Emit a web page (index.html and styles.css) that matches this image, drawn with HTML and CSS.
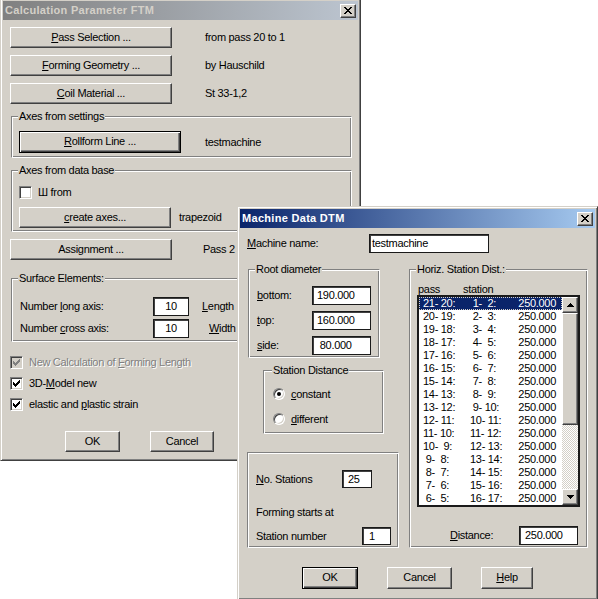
FILE: index.html
```html
<!DOCTYPE html>
<html>
<head>
<meta charset="utf-8">
<link rel="stylesheet" href="styles.css">
</head>
<body>
<div class="win win-main">
  <div class="title title-inactive">
    <span class="title-text">Calculation Parameter FTM</span>
    <span class="close raised"><svg width="8" height="7" viewBox="0 0 8 7" shape-rendering="crispEdges"><path d="M0 0h2v1h-2zM6 0h2v1h-2zM1 1h2v1h-2zM5 1h2v1h-2zM2 2h4v1h-4zM3 3h2v1h-2zM2 4h4v1h-4zM1 5h2v1h-2zM5 5h2v1h-2zM0 6h2v1h-2zM6 6h2v1h-2z"/></svg></span>
  </div>
  <div class="m-body">
    <div class="row m-btnrow"><div class="btn raised w162 h21"><span><u>P</u>ass Selection ...</span></div><span class="m-val">from pass 20 to 1</span></div>
    <div class="row m-btnrow"><div class="btn raised w162 h21"><span><u>F</u>orming Geometry ...</span></div><span class="m-val">by Hauschild</span></div>
    <div class="row m-btnrow"><div class="btn raised w162 h21"><span><u>C</u>oil Material ...</span></div><span class="m-val">St 33-1,2</span></div>

    <div class="grp m-g1">
      <span class="glabel">Axes from settings</span>
      <div class="row g1-row"><div class="btn default w162 h22"><span><u>R</u>ollform Line ...</span></div><span class="g1-val">testmachine</span></div>
    </div>

    <div class="grp m-g2">
      <span class="glabel">Axes from data base</span>
      <div class="row g2-cb"><span class="cb"></span><span class="cb-text">Ш from</span></div>
      <div class="row g2-btn"><div class="btn raised w152 h21"><span><u>c</u>reate axes...</span></div><span class="g2-val">trapezoid</span></div>
    </div>

    <div class="row m-assign"><div class="btn raised w162 h21"><span>Assignment ...</span></div><span class="assign-val">Pass 2</span></div>

    <div class="grp m-g3">
      <span class="glabel">Surface Elements:</span>
      <div class="row g3-row1"><span class="g3-lbl">Number <u>l</u>ong axis:</span><div class="edit center w36 h19">10</div><span class="g3-len"><u>L</u>ength</span></div>
      <div class="row g3-row2"><span class="g3-lbl">Number <u>c</u>ross axis:</span><div class="edit center w36 h19">10</div><span class="g3-wid"><u>W</u>idth</span></div>
    </div>

    <div class="row m-cb first"><span class="cb disabled"><svg width="7" height="7" viewBox="0 0 7 7" shape-rendering="crispEdges"><path d="M6 0h1v1h-1zM5 1h2v1h-2zM0 2h1v1h-1zM4 2h3v1h-3zM0 3h2v1h-2zM3 3h3v1h-3zM0 4h5v1h-5zM1 5h3v1h-3zM2 6h1v1h-1z"/></svg></span><span class="cb-text dis">New Calculation of <u>F</u>orming Length</span></div>
    <div class="row m-cb"><span class="cb"><svg width="7" height="7" viewBox="0 0 7 7" shape-rendering="crispEdges"><path d="M6 0h1v1h-1zM5 1h2v1h-2zM0 2h1v1h-1zM4 2h3v1h-3zM0 3h2v1h-2zM3 3h3v1h-3zM0 4h5v1h-5zM1 5h3v1h-3zM2 6h1v1h-1z"/></svg></span><span class="cb-text">3D-<u>M</u>odel new</span></div>
    <div class="row m-cb"><span class="cb"><svg width="7" height="7" viewBox="0 0 7 7" shape-rendering="crispEdges"><path d="M6 0h1v1h-1zM5 1h2v1h-2zM0 2h1v1h-1zM4 2h3v1h-3zM0 3h2v1h-2zM3 3h3v1h-3zM0 4h5v1h-5zM1 5h3v1h-3zM2 6h1v1h-1z"/></svg></span><span class="cb-text">elastic and <u>p</u>lastic strain</span></div>

    <div class="row m-okrow"><div class="btn raised w55 h21"><span>OK</span></div><div class="btn raised w64 h21 m-cancel"><span>Cancel</span></div></div>
  </div>
</div>

<div class="win win-dtm">
  <div class="title title-active">
    <span class="title-text">Machine Data DTM</span>
    <span class="close raised"><svg width="8" height="7" viewBox="0 0 8 7" shape-rendering="crispEdges"><path d="M0 0h2v1h-2zM6 0h2v1h-2zM1 1h2v1h-2zM5 1h2v1h-2zM2 2h4v1h-4zM3 3h2v1h-2zM2 4h4v1h-4zM1 5h2v1h-2zM5 5h2v1h-2zM0 6h2v1h-2zM6 6h2v1h-2z"/></svg></span>
  </div>
  <div class="d-body">
    <div class="row d-name"><span class="d-name-lbl"><u>M</u>achine name:</span><div class="edit w120 h19">testmachine</div></div>

    <div class="d-cols">
      <div class="d-left">
        <div class="grp g-root">
          <span class="glabel">Root diameter</span>
          <div class="row root-row first"><span class="root-lbl"><u>b</u>ottom:</span><div class="edit pad4 w59 h19">190.000</div></div>
          <div class="row root-row"><span class="root-lbl"><u>t</u>op:</span><div class="edit pad4 w59 h19">160.000</div></div>
          <div class="row root-row"><span class="root-lbl"><u>s</u>ide:</span><div class="edit pad4 w59 h19"> 80.000</div></div>
        </div>
        <div class="grp g-sta">
          <span class="glabel">Station Distance</span>
          <div class="row rad-row first"><span class="radio"><span class="dot"></span></span><span class="rad-text"><u>c</u>onstant</span></div>
          <div class="row rad-row"><span class="radio"></span><span class="rad-text"><u>d</u>ifferent</span></div>
        </div>
        <div class="grp g-low">
          <div class="row low-row1"><span class="low-lbl1"><u>N</u>o. Stations</span><div class="edit pad5 w30 h18">25</div></div>
          <div class="low-line">Forming starts at</div>
          <div class="row low-row2"><span class="low-lbl2">Station number</span><div class="edit pad6 w29 h18">1</div></div>
        </div>
      </div>

      <div class="grp g-horiz">
        <span class="glabel">Horiz. Station Dist.:</span>
        <div class="hdr"><span class="hdr-pass">pass</span><span>station</span></div>
        <div class="listbox">
          <div class="rows">
            <div class="lrow sel"><span class="c1">21- 20:</span><span class="c2"> 1-  2:</span><span class="c3">250.000</span></div>
            <div class="lrow"><span class="c1">20- 19:</span><span class="c2"> 2-  3:</span><span class="c3">250.000</span></div>
            <div class="lrow"><span class="c1">19- 18:</span><span class="c2"> 3-  4:</span><span class="c3">250.000</span></div>
            <div class="lrow"><span class="c1">18- 17:</span><span class="c2"> 4-  5:</span><span class="c3">250.000</span></div>
            <div class="lrow"><span class="c1">17- 16:</span><span class="c2"> 5-  6:</span><span class="c3">250.000</span></div>
            <div class="lrow"><span class="c1">16- 15:</span><span class="c2"> 6-  7:</span><span class="c3">250.000</span></div>
            <div class="lrow"><span class="c1">15- 14:</span><span class="c2"> 7-  8:</span><span class="c3">250.000</span></div>
            <div class="lrow"><span class="c1">14- 13:</span><span class="c2"> 8-  9:</span><span class="c3">250.000</span></div>
            <div class="lrow"><span class="c1">13- 12:</span><span class="c2"> 9- 10:</span><span class="c3">250.000</span></div>
            <div class="lrow"><span class="c1">12- 11:</span><span class="c2">10- 11:</span><span class="c3">250.000</span></div>
            <div class="lrow"><span class="c1">11- 10:</span><span class="c2">11- 12:</span><span class="c3">250.000</span></div>
            <div class="lrow"><span class="c1">10-  9:</span><span class="c2">12- 13:</span><span class="c3">250.000</span></div>
            <div class="lrow"><span class="c1"> 9-  8:</span><span class="c2">13- 14:</span><span class="c3">250.000</span></div>
            <div class="lrow"><span class="c1"> 8-  7:</span><span class="c2">14- 15:</span><span class="c3">250.000</span></div>
            <div class="lrow"><span class="c1"> 7-  6:</span><span class="c2">15- 16:</span><span class="c3">250.000</span></div>
            <div class="lrow"><span class="c1"> 6-  5:</span><span class="c2">16- 17:</span><span class="c3">250.000</span></div>
          </div>
          <div class="sb">
            <div class="sb-btn raised"><svg width="7" height="4" viewBox="0 0 7 4" shape-rendering="crispEdges"><path d="M3 0h1v1h-1zM2 1h3v1h-3zM1 2h5v1h-5zM0 3h7v1h-7z"/></svg></div>
            <div class="sb-thumb raised"></div>
            <div class="sb-track"></div>
            <div class="sb-btn raised"><svg width="7" height="4" viewBox="0 0 7 4" shape-rendering="crispEdges"><path d="M0 0h7v1h-7zM1 1h5v1h-5zM2 2h3v1h-3zM3 3h1v1h-1z"/></svg></div>
          </div>
        </div>
        <div class="row dist-row"><span class="dist-lbl"><u>D</u>istance:</span><div class="edit pad5 w59 h19">250.000</div></div>
      </div>
    </div>

    <div class="row d-btns"><div class="btn default w56 h22"><span>OK</span></div><div class="btn raised w65 h22 d-cancel"><span>Cancel</span></div><div class="btn raised w52 h22 d-help"><span><u>H</u>elp</span></div></div>
  </div>
</div>
</body>
</html>
```

FILE: styles.css
```css
* { box-sizing: border-box; }
html, body { margin: 0; padding: 0; }
body {
  width: 598px; height: 599px; overflow: hidden; position: relative;
  background: #fff; color: #000;
  font-family: "Liberation Sans", Arial, sans-serif;
  font-size: 11px; line-height: 13px; letter-spacing: -0.3px;
}
u { text-decoration: underline; text-underline-offset: 1px; }
svg { display: block; fill: #000; }

/* windows */
.win {
  position: absolute; background: #d4d0c8;
  border: 1px solid; border-color: #d4d0c8 #404040 #404040 #d4d0c8;
  box-shadow: inset 1px 1px 0 #fff, inset -1px -1px 0 #808080;
  padding: 2px;
}
.win-main { left: 0; top: -2px; width: 361px; height: 463px; }
.win-dtm { left: 237px; top: 206px; width: 361px; height: 394px; }

.title {
  height: 19px; display: flex; align-items: center; justify-content: space-between;
  padding-left: 2px; font-weight: bold; letter-spacing: 0.3px;
}
.title-inactive { background: linear-gradient(to right, #808080, #bcc5d0); color: #d4d0c8; }
.title-active { background: linear-gradient(to right, #0a246a, #a6caf0); color: #fff; }
.close { width: 16px; height: 14px; margin-right: 2px; display: flex; align-items: center; justify-content: center; }

/* 3d styles */
.raised {
  background: #d4d0c8;
  border: 1px solid; border-color: #fff #404040 #404040 #fff;
  box-shadow: inset -1px -1px 0 #808080;
}
.btn { display: flex; align-items: center; justify-content: center; padding-bottom: 1px; flex: none; }
.default {
  background: #d4d0c8; border: 1px solid #000;
  box-shadow: inset 1px 1px 0 #fff, inset -1px -1px 0 #404040, inset -2px -2px 0 #808080;
}
.edit {
  background: #fff; border: 1px solid #1a1a1a;
  box-shadow: inset 1px 1px 0 #404040;
  padding-left: 2px; display: flex; align-items: center; white-space: pre; flex: none;
}
.edit.center { justify-content: center; padding-left: 0; }
.pad4 { padding-left: 4px; }
.pad5 { padding-left: 5px; }
.pad6 { padding-left: 6px; }

.w29 { width: 29px; } .w30 { width: 30px; } .w36 { width: 36px; }
.w52 { width: 52px; } .w55 { width: 55px; } .w56 { width: 56px; }
.w59 { width: 59px; } .w64 { width: 64px; } .w65 { width: 65px; }
.w120 { width: 120px; } .w152 { width: 152px; } .w162 { width: 162px; }
.h18 { height: 18px; } .h19 { height: 19px; } .h21 { height: 21px; } .h22 { height: 22px; }

.row { display: flex; align-items: center; }

/* group boxes */
.grp {
  border: 1px solid; border-color: #808080 #fff #fff #808080;
  box-shadow: inset 1px 1px 0 #fff, inset -1px -1px 0 #808080;
  flex: none;
}
.glabel {
  display: table; background: #d4d0c8; padding: 0 1px;
  margin: -7px 0 0 6px; line-height: 13px;
}

/* checkbox */
.cb {
  width: 13px; height: 13px; flex: none; background: #fff;
  border: 1px solid; border-color: #808080 #fff #fff #808080;
  box-shadow: inset 1px 1px 0 #404040, inset -1px -1px 0 #d4d0c8;
  display: flex; align-items: center; justify-content: center;
}
.cb.disabled { background: #d4d0c8; }
.cb.disabled svg { fill: #808080; }
.cb-text { margin-left: 6px; }
.dis { color: #808080; text-shadow: 1px 1px 0 #fff; }

/* radio */
.radio {
  width: 12px; height: 12px; border-radius: 50%; flex: none; background: #fff;
  border: 1px solid; border-color: #808080 #fff #fff #808080;
  box-shadow: inset 1px 1px 0 #404040, inset -1px -1px 0 #d4d0c8;
  display: flex; align-items: center; justify-content: center;
}
.dot { width: 4px; height: 4px; border-radius: 50%; background: #000; }
.rad-text { margin-left: 6px; }

/* main dialog body */
.m-btnrow { margin: 7px 0 0 7px; }
.m-val { margin-left: 33px; }
.m-g1 { margin: 12px 0 0 8px; width: 341px; height: 42px; }
.g1-row { margin: 8px 0 0 7px; }
.g1-val { margin-left: 24px; }
.m-g2 { margin: 12px 0 0 8px; width: 341px; height: 62px; }
.g2-cb { margin: 9px 0 0 7px; height: 13px; }
.g2-btn { margin: 8px 0 0 7px; }
.g2-val { margin-left: 8px; }
.m-assign { margin: 7px 0 0 7px; }
.assign-val { margin-left: 31px; }
.m-g3 { margin: 18px 0 0 8px; width: 341px; height: 64px; }
.g3-row1 { margin: 12px 0 0 8px; }
.g3-row2 { margin: 3px 0 0 8px; }
.g3-lbl { width: 133px; flex: none; }
.g3-len { margin-left: 13px; }
.g3-wid { margin-left: 20px; }
.m-cb { margin: 8px 0 0 7px; height: 13px; }
.m-cb.first { margin-top: 14px; }
.m-okrow { margin: 20px 0 0 62px; }
.m-cancel { margin-left: 30px; }

/* machine data dialog body */
.d-name { margin: 6px 0 0 7px; }
.d-name-lbl { width: 122px; flex: none; }
.d-cols { display: flex; align-items: flex-start; margin: 16px 0 0 7px; }
.d-left { width: 152px; flex: none; margin-right: 10px; }
.g-root { margin-left: 1px; width: 132px; height: 89px; }
.root-row { margin: 6px 0 0 8px; }
.root-row.first { margin-top: 10px; }
.root-lbl { width: 55px; flex: none; }
.g-sta { margin: 12px 0 0 16px; width: 121px; height: 64px; }
.g-sta .glabel { margin-left: 8px; }
.rad-row { margin: 13px 0 0 9px; height: 12px; }
.rad-row.first { margin-top: 11px; }
.g-low { margin-top: 18px; width: 152px; height: 96px; }
.low-row1 { margin: 17px 0 0 8px; }
.low-lbl1 { width: 86px; flex: none; }
.low-line { margin: 18px 0 0 8px; line-height: 13px; }
.low-row2 { margin: 8px 0 0 8px; }
.low-lbl2 { width: 106px; flex: none; }

.g-horiz { width: 179px; height: 279px; }
.hdr { display: flex; margin: 7px 0 0 8px; line-height: 12px; height: 12px; }
.hdr-pass { width: 45px; }
.listbox {
  margin-left: 7px; width: 163px; height: 212px;
  border: 2px solid #1a1a1a; background: #fff; display: flex;
}
.rows { flex: 1; }
.lrow { display: flex; height: 13px; line-height: 13px; padding-left: 4px; padding-right: 6px; white-space: pre; }
.lrow.sel { background: #0a246a; color: #fff; outline: 1px dotted #d4d0c8; outline-offset: -1px; }
.c1 { width: 47px; flex: none; }
.c2 { flex: none; }
.c3 { flex: 1; text-align: right; }
.sb { width: 16px; flex: none; display: flex; flex-direction: column; }
.sb-btn { height: 16px; display: flex; align-items: center; justify-content: center; }
.sb-thumb { height: 112px; }
.sb-track {
  height: 64px;
  background-color: #fff;
  background-image: repeating-conic-gradient(#d4d0c8 0 25%, #fff 0 50%);
  background-size: 2px 2px;
}
.dist-row { margin: 19px 0 0 40px; }
.dist-lbl { width: 69px; flex: none; }

.d-btns { margin: 19px 0 0 62px; }
.d-cancel { margin-left: 29px; }
.d-help { margin-left: 29px; }
```
